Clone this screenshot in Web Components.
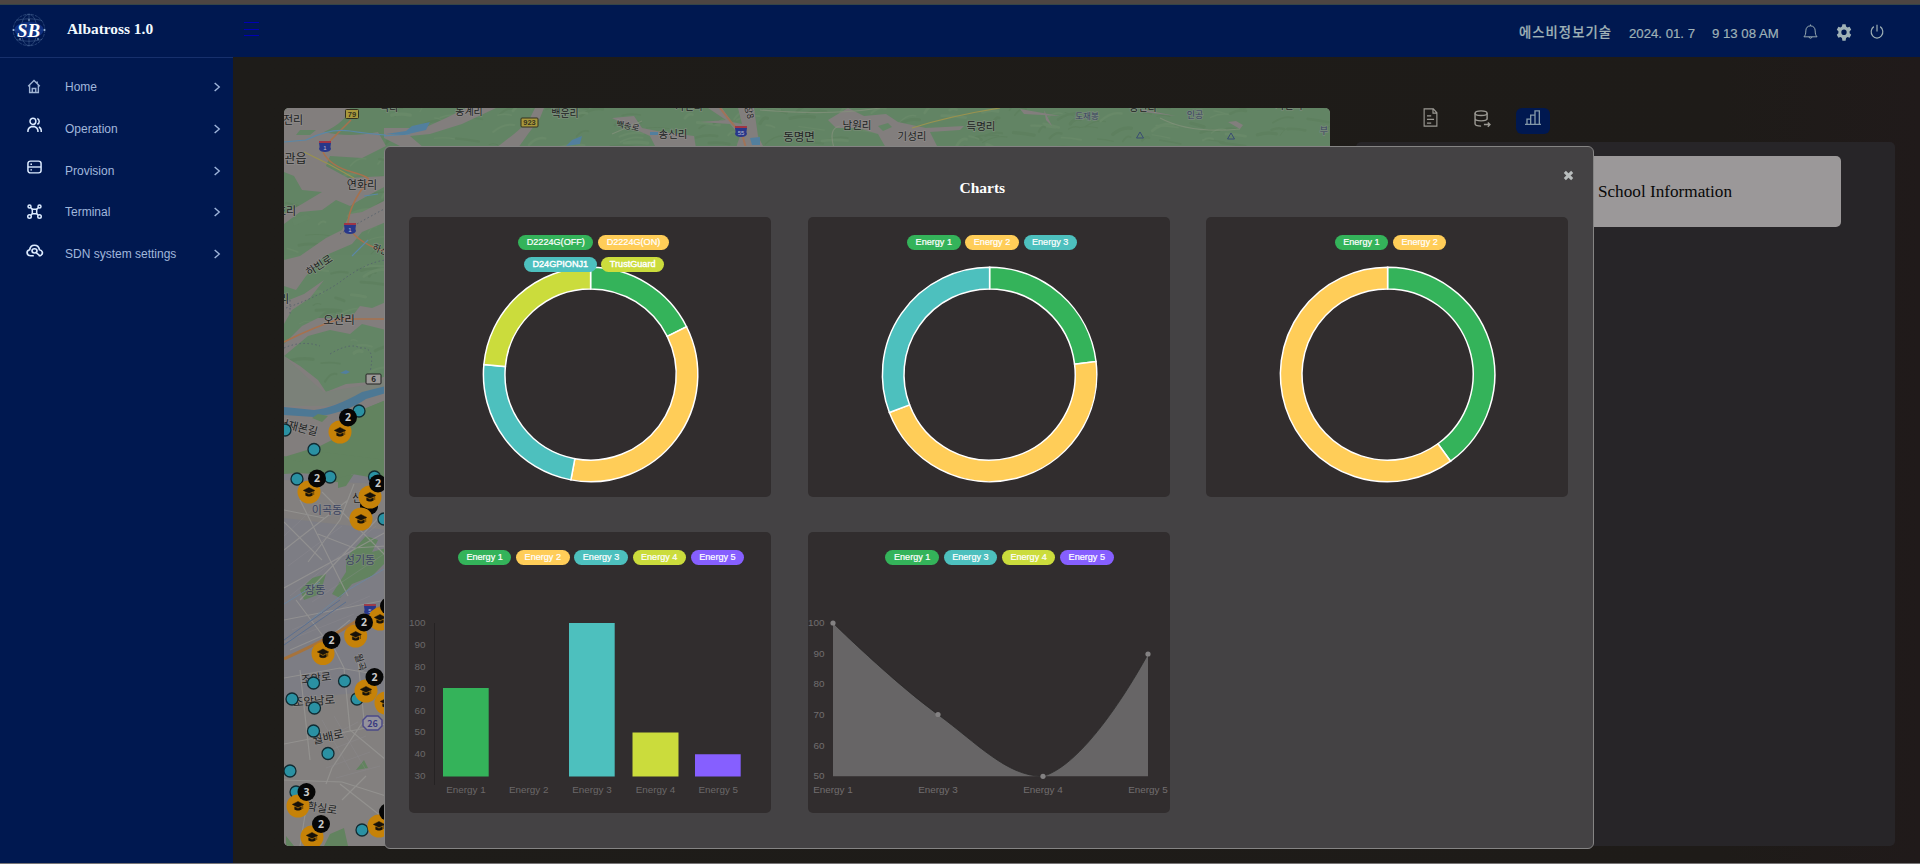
<!DOCTYPE html>
<html lang="ko">
<head>
<meta charset="utf-8">
<title>Albatross 1.0</title>
<style>
html,body{margin:0;height:100%;background:#1e1b18;overflow:hidden}
body{font-family:"Liberation Sans","Noto Sans CJK KR",sans-serif}
</style>
</head>
<body>
<sb-app></sb-app>
<script>
const define=(name,build)=>customElements.define(name,class extends HTMLElement{
  connectedCallback(){
    if(this.shadowRoot)return;
    this.attachShadow({mode:'open'}).innerHTML=build(this);
  }
});

/* Line icons, 24 unit grid */
const ICONS={
  home:'<path d="M2 11.500 12 2.500l10 9M4.500 10v11.500h15V10M9 21.500v-6.500h6v6.500M17.500 4v3"/>',
  users:'<circle cx="9.500" cy="6.500" r="4.700"/><path d="M1.500 22.500v-2a7 7 0 0 1 5-6h6a7 7 0 0 1 5 6v2M16.500 2.200a4.700 4.700 0 0 1 0 8.800M19 15a6 6 0 0 1 3.800 5.500v2"/>',
  server:'<rect x="1.500" y="2" width="21" height="20" rx="4"/><path d="M1.500 12h21"/><path d="M5.500 7.200H8M5.500 17H8"/>',
  nodes:'<circle cx="4" cy="4" r="2.400"/><circle cx="20" cy="4" r="2.400"/><circle cx="4" cy="20" r="2.800"/><circle cx="20" cy="20" r="2.800"/><rect x="8.500" y="8.500" width="7" height="7" rx="1"/><path d="M6 6l3 3M18 6l-3 3M6 18l3-3M18 18l-3-3"/>',
  cloud:'<path d="M11 20.500H6.500a5 5 0 0 1-1.300-9.800Q6 3.500 12 3.500t7 7.200a5 5 0 0 1 2.500 8.600q-1.500 1.200-3.500 1.200"/><circle cx="12" cy="12.500" r="3.500"/><path d="M14.500 15.500l5 5"/>',
  right:'<path d="M8 4l8 8-8 8"/>',
  bell:'<path d="M1.500 20.500h21c-2-2-3-4.500-3-9.500 0-5-3-8-7.500-8s-7.500 3-7.500 8c0 5-1 7.500-3 9.500zM12 3V.8M9.500 20.500c.5 3 4.500 3 5 0"/>',
  gear:'<path stroke="none" fill="currentColor" fill-rule="evenodd" d="M9.600.5h4.800l.7 3.200 2.200 1.200 3.100-1 2.400 4.200-2.400 2.200v2.600l2.400 2.200-2.400 4.200-3.100-1-2.200 1.300-.7 3.900H9.600l-.7-3.900-2.200-1.300-3.100 1-2.400-4.200 2.400-2.200v-2.600L1.200 8.100l2.400-4.200 3.100 1 2.200-1.200zM12 7.600a4 4 0 1 0 0 8 4 4 0 0 0 0-8z"/>',
  power:'<path d="M12 1v11M6.500 4.200a10 10 0 1 0 11 0"/>',
  doc:'<path d="M3 1h13l5 5v17H3zM15.500 1v5.500H21M7 10h6M7 14.500h10M7 19h6"/>',
  database:'<ellipse cx="10" cy="4.500" rx="8.500" ry="3.300"/><path d="M1.500 4.500v15c0 2 4 3.300 8.500 3.300M18.500 4.500v9M1.500 12c0 2 4 3.300 8.500 3.300s8.500-1.300 8.500-3.300M14 20.500h7.500M19.500 17.500l3 3-3 3"/>',
  chart:'<path d="M0 22.800h24M3 22.500v-8h5.500M8.500 22.500V8H15M15 22.500V1.500h6.500v21"/>',
  close:'<path d="M4 4l16 16M20 4L4 20" stroke-width="6.500"/>'
};
define('sb-icon',el=>`<style>:host{display:block;flex:none}svg{display:block;overflow:visible}</style>
<svg width="${el.getAttribute('w')||16}" height="${el.getAttribute('h')||el.getAttribute('w')||16}" viewBox="0 0 24 24" preserveAspectRatio="none" fill="none" stroke="currentColor" stroke-width="${el.getAttribute('stroke')||2}">${ICONS[el.getAttribute('name')]}</svg>`);

define('sb-logo',()=>`<style>:host{display:block;flex:none}svg{display:block}</style>
<svg width="34" height="36" viewBox="-17 -18 34 36"><g fill="none" stroke="#6f8fb8" stroke-width=".5" opacity=".7">
<circle r="15.800" stroke-dasharray="3 1"/><ellipse rx="8" ry="15.800"/><path d="M0-16V16M-16 0H16M-13-9.500Q0-13 13-9.500M-13 9.500Q0 13 13 9.500"/></g>
<ellipse rx="14.500" ry="8" fill="#153a94" opacity=".7"/>
<g fill="#9eb8d8"><circle cx="-15.500" r="1"/><circle cx="15.500" r="1"/><circle cy="-10" r=".8"/><circle cx="-9" cy="9" r=".8"/><circle cx="9" cy="9" r=".8"/></g>
<text y="6.500" x="-.500" text-anchor="middle" font-family="Liberation Serif,serif" font-style="italic" font-weight="bold" font-size="19" fill="#fff">SB</text></svg>`);

define('sb-header',()=>`<style>
:host{display:flex;align-items:stretch;height:52px;background:#001850;color:#9fb1b6}
.brand{width:233px;box-sizing:border-box;display:flex;align-items:flex-start;padding-left:12px}
sb-logo{margin-top:7px}
h1{margin:15px 0 0 21px;font:bold 15.400px/18px "Liberation Serif",serif;color:#f2faff;white-space:nowrap}
.burger{margin:17px 0 0 11px;width:15px;height:14px;display:flex;flex-direction:column;justify-content:space-between}
.burger i{height:1px;background:#0000b4}
.right{margin-left:auto;display:flex;align-items:flex-start;padding-right:36px;font-size:13.200px;line-height:16px;white-space:nowrap;-webkit-text-stroke:.2px #9fb1b6}
.name{font:500 13.300px/16px "Noto Sans CJK KR",sans-serif;margin-top:19px;width:93px;letter-spacing:1.050px}
.date{margin:21px 0 0 17px;width:66px}.time{margin:21px 0 0 17px;width:67px}
sb-icon{margin-top:19px}
</style><div class="brand"><sb-logo></sb-logo><h1>Albatross 1.0</h1></div><div class="burger"><i></i><i></i><i></i></div>
<div class="right"><span class="name">에스비정보기술</span><span class="date">2024. 01. 7</span><span class="time">9 13 08 AM</span>
<sb-icon name="bell" w="15" h="15" stroke="1.500" style="margin-left:24px"></sb-icon><sb-icon name="gear" w="16" h="17" style="margin-left:18px"></sb-icon><sb-icon name="power" w="14" h="15" style="margin-left:18px"></sb-icon></div>`);

define('sb-nav-item',el=>`<style>
:host{display:flex;align-items:center;height:41.700px;padding:0 9px 0 26px;color:#a0b7dc;font-size:12px}
.ic{color:${el.getAttribute('tone')||'#dcebff'};width:16px;display:flex;justify-content:center;margin-top:${el.getAttribute('shift')}px;margin-right:23px}
span{flex:1;white-space:nowrap}
</style><div class="ic"><sb-icon name="${el.getAttribute('icon')}" w="${el.getAttribute('size')||15}" h="${el.getAttribute('ih')||15}" stroke="2.400"></sb-icon></div><span><slot></slot></span><sb-icon name="right" w="14" h="12" stroke="2.300"></sb-icon>`);

define('sb-sidebar',()=>`<style>
:host{display:block;width:233px;flex:none;box-sizing:border-box;background:#001850;border-top:1px solid #17306c;padding-top:8.500px}
</style>
<sb-nav-item icon="home" tone="#a0b4d4" size="14" shift="-1">Home</sb-nav-item>
<sb-nav-item icon="users" ih="16" shift="-8">Operation</sb-nav-item>
<sb-nav-item icon="server" ih="14" shift="-8">Provision</sb-nav-item>
<sb-nav-item icon="nodes" shift="-2">Terminal</sb-nav-item>
<sb-nav-item icon="cloud" size="17" ih="15" shift="-8">SDN system settings</sb-nav-item>`);

/* Map canvas: terrain, roads, place names and pins share one coordinate space */
const places=[
 ['지전리',288,124,11],['지관읍',290,163,12],['연화리',362,189,11],['흐리',286,215,11],['하빈로',319,269,10.500,-33],['동리',279,303,11],['오산리',339,324,11.500],['하산',381,253,9,22],
 ['서재본길',298,431,11,14],['신',357,502,11],['조암로',316,682,11,-7],['조암남로',314,705,11.500,-4],['월곡',361,666,9.500,72],['월배로',328,741,11.500,-12],['학실로',322,812,11,8],
 ['덕리',389,111,10],['동계리',469,115,10],['백운리',565,117,10],['백송로',628,129,8.500,12],['송신리',673,138,10.500],['가신리',689,110,10],['장8',750,116,9,75],['동명면',799,141,11.500],['남원리',857,129,10.500],['기성리',912,140,10.500],['득명리',981,130,10.500],['동산리',1143,111,10],['가산리',1289,109,10]
];
const softPlaces=[['이곡동',327,514,11],['성기동',360,564,11],['장동',315,594,11.500],['도재봉',1087,119,8.500],['인공',1195,118,9],['부',1324,134,9]];
const label=(p,fill,halo)=>`<text x="${p[1]}" y="${p[2]}" font-size="${p[3]}" text-anchor="middle" fill="${fill}" stroke="${halo}" stroke-width="1.600" stroke-opacity=".45" paint-order="stroke"${p[4]?` transform="rotate(${p[4]} ${p[1]} ${p[2]-4})"`:''}>${p[0]}</text>`;
const dots=[[359,411],[285,430],[314,449.5],[297,479],[330,477],[374.5,477],[384,519],[313.5,683],[344.5,681],[292,699],[314.5,708],[357,699],[313.5,731],[328,753.5],[290,771],[296,792],[362,830]];
const dot=([x,y])=>`<circle cx="${x}" cy="${y}" r="6" fill="#2a91a3" stroke="#102b32" stroke-width="1.300"/>`;
const cap=([x,y])=>`<g transform="translate(${x} ${y})"><circle r="11.500" fill="#c68208"/><path d="M-5.700-1.600 0-4.500l5.700 2.900L0 1.200zM-3.300.8 0 2.400 3.300.8v2.600Q0 5.200-3.300 3.400zM4.700-1.500V3" fill="#17120a" stroke="#17120a" stroke-width=".5"/></g>`;
const badge=([x,y,n])=>`<circle cx="${x}" cy="${y}" r="9" fill="#060606"/>${n?`<text x="${x}" y="${y+3.7}" text-anchor="middle" font-family="Open Sans,sans-serif" font-weight="bold" font-size="10.500" fill="#cacaca">${n}</text>`:''}`;
const shield=(x,y,n)=>`<path d="M${x-6} ${y-3}h12q-1 4 0 6-1 3-6 3t-6-3q1-2 0-6z" fill="#29378a"/><path d="M${x-6} ${y-4}h12" stroke="#a03545" stroke-width="1.800"/><text x="${x}" y="${y+3.5}" font-size="6" text-anchor="middle" fill="#b8b8cc" font-family="Liberation Sans,sans-serif">${n}</text>`;
const plate=(x,y,w,n)=>`<rect x="${x-w/2}" y="${y-4.5}" width="${w}" height="9" rx="1" fill="#a8983c" stroke="#33311e"/><text x="${x}" y="${y+2.7}" font-size="7.500" font-weight="bold" text-anchor="middle" fill="#35331f" font-family="Liberation Sans,sans-serif">${n}</text>`;

/* Deterministic ridge shading across the hills */
let seed=7;const rnd=()=>(seed=(seed*16807)%2147483647)/2147483647;
let ridges='';
for(let i=0;i<190;i++){const wide=i<135,x=wide?385+rnd()*945:284+rnd()*100,y=wide?106+rnd()*42:150+rnd()*235,l=6+rnd()*20,d=rnd()*12-8;
 ridges+=`<path d="M${x.toFixed(1)} ${y.toFixed(1)}q${(l/2).toFixed(1)} ${(d-2).toFixed(1)} ${l.toFixed(1)} ${d.toFixed(1)}" stroke="${rnd()>.5?'#587a57':'#72906f'}" stroke-width="${(1+rnd()*2.5).toFixed(1)}"/>`;}

define('sb-map',()=>`<style>:host{display:block;width:1046px;height:738px;border-radius:5px;overflow:hidden;background:#807e7d}svg{display:block}</style>
<svg width="1046" height="738" viewBox="284 108 1046 738" font-family="Noto Sans CJK KR,sans-serif">
<rect x="284" y="108" width="1046" height="330" fill="#638565"/>
<g fill="none" stroke-linecap="round" opacity=".38">${ridges}</g>
<g fill="#827e7d">
<path d="M284 108H350Q346 122 324 132 348 138 378 132L386 146 362 158 330 156 326 166 348 178 386 176 386 186 360 200 350 206 336 200 322 210 300 212 284 224V214L302 204 322 192 302 190 294 176 284 172z"/>
<path d="M386 222 362 232 352 244 324 256 306 276 296 290 284 286V260L300 256 326 238 342 230 350 214 362 212 386 200z"/>
<path d="M284 302 304 294 324 280 310 298 292 310 284 324z"/>
<path d="M386 302 372 308 360 306 354 314 338 318 318 318 302 326 284 344V356L308 336 330 330 350 334 362 324 386 330z"/>
<path d="M284 356 300 366 318 380 326 392 346 384 370 382 386 376V400L358 412 344 438 320 450 284 456z"/>
<path d="M384 128 424 128 446 118 466 108H496L462 124 430 134 410 136 424 148H404L384 138z"/>
<path d="M535 108 528 122 514 134 496 148H518L528 134 540 118 544 108z"/>
<path d="M612 118 634 116 642 128 662 132 694 136 696 148H656L650 136 632 128z"/>
<path d="M708 108 726 120 700 122 730 124 740 136 736 148H764L758 136 754 108 738 108 742 124 732 122 722 108z"/>
<path d="M828 120 848 108 864 116 886 114 898 122 926 128 964 126 960 130 930 132 938 148H886L878 134 858 128 836 128z"/>
<path d="M1020 109 1060 116 1024 114zM1228 122 1236 121 1243 125 1240 129zM1044 110 1052 126 1046 120zM1140 109 1176 116 1144 112z"/>
</g>
<path d="M300 130h16l-6 5h-14zM292 220l14-6 6 4-18 8zM878 126l10-3 4 4-9 4z" fill="#638565"/>
<path d="M284 356 Q310 380 324 392 L372 384 386 378V386L330 406H284z" fill="#7b8179"/>
<path d="M284 415 314 417Q346 413 366 399L386 393V386L362 392Q334 408 314 410L284 407z" fill="#4d7894"/>
<path d="M284 457 320 446 344 434 356 412 386 400V478L342 476 284 472z" fill="#62835f"/>
<rect x="284" y="474" width="102" height="372" fill="#7d7d84"/>
<path d="M284 456 298 462 322 452 386 460V480L352 474 340 484 310 472 284 474z" fill="#62835f"/>
<path d="M284 480 386 484V530L284 518zM284 700 386 690V846H284z" fill="#83807f"/>
<path d="M318 414l10 2-6 6-10-4zM338 478l16-4-8 12-8 2zM366 536 378 540 372 552 386 548V562L372 576 352 584 340 598 332 594 346 572 346 558zM312 578 326 574 320 594 304 600 300 590zM356 770l8-10 4 8zM330 834l14-6 4 18h-24zM286 836l8 10h-8z" fill="#62835f"/>
<g fill="none" stroke="#9a9895" stroke-width="1.200" opacity=".7">
<path d="M284 522 322 560M284 550 348 500M300 600 384 512M284 588 386 532M300 500 348 596M322 492 386 556M284 620 386 600M296 600 326 640 350 620M284 678 340 668 386 676M284 744 386 724M284 780 342 782 386 796M330 640 344 668 350 730 386 760M300 670 310 760M358 660 364 720 332 768 326 784M342 800 366 776M310 784 300 846M340 784 386 820M290 650 322 636M318 534 354 548 386 546M284 510 324 518M354 484 340 520 308 562"/></g>
<g fill="none" stroke="#8f8d94" stroke-width=".5" opacity=".65"><path d="M284 536 318 504M288 566 342 526M290 596 376 526M312 602 384 554M316 744 358 722M320 754 366 736M326 768 370 752M336 778 380 766M322 720 350 770M334 716 366 770M292 630 370 596M284 642 354 614"/></g>
<g fill="none" stroke="#6e859c" stroke-width="1"><path d="M306 624 348 590 386 568M284 604 320 582"/><path d="M284 640 340 600M284 645 346 602" stroke="#5b6f8e"/></g>
<path d="M284 659Q330 638 355 622T386 606" fill="none" stroke="#a6733c" stroke-width="3"/>
<g fill="none" stroke="#53606c" stroke-width=".9" stroke-dasharray="1.500 2.500"><path d="M286 308Q320 296 340 282 366 262 386 260M340 234Q356 224 386 208M284 348Q302 340 320 346M330 354Q350 342 360 348 376 346 370 372M290 300v14"/></g>
<g fill="none" stroke="#a7714d" stroke-width="1.600"><path d="M351 120 330 141M323 152Q330 166 352 172T367 182Q350 204 348 222 350 240 386 252M284 342Q316 326 340 319H386"/></g>
<path d="M304 152Q330 164 354 178M912 128Q950 116 1000 108" fill="none" stroke="#99924f" stroke-width="1.200"/>
<path d="M720 108Q732 124 742 134L746 148" fill="none" stroke="#a17358" stroke-width="2"/>
<path d="M284 142 306 140Q330 128 350 131T386 135M384 136 410 134M352 256 368 240M364 196 378 194" fill="none" stroke="#5b87a6" stroke-width="1.200"/>
<path d="M386 134 406 131 412 126 430 122 426 130 404 135zM572 140 582 136 580 144 566 146zM650 132h8v3h-8zM750 138l10-1v8h-8zM340 373l6-3 4 2-4 2z" fill="#527f9e"/>
<path d="M612 134 642 121M834 148Q828 128 840 126M760 110Q830 116 880 108M1160 118Q1190 134 1240 129" fill="none" stroke="#85927c" stroke-width="1.200" opacity=".7"/>
<path d="M378 815h8v20h-10z" fill="#52799c"/>
<path d="M1140 132l3.500 6h-7zM1231 133l3.500 6h-7z" fill="none" stroke="#394c73"/>
<g>${places.map(p=>label(p,'#201f1f','#9b9897')).join('')}</g>
${softPlaces.map(p=>label(p,'#3b4460','#918f94')).join('')}
${plate(352,114,13,'79')}${plate(529.5,122.5,17,'923')}${shield(325,146,'1')}${shield(350,228,'1')}${shield(741,131,'55')}${shield(370,609,'5')}
<rect x="366" y="374" width="15" height="10" rx="1" fill="#9a9895" stroke="#222"/><text x="373.500" y="382" font-size="8" text-anchor="middle" fill="#222" font-weight="bold">6</text>
<path d="M367 716h11l4 4v6l-4 4h-11l-4-4v-6z" fill="#94929d" stroke="#4b4988" stroke-width="1.400"/><text x="372.500" y="726.500" font-size="9" text-anchor="middle" fill="#3a3a80" font-weight="bold">26</text>
${dots.map(dot).join('')}${badge([369,506])}
${[[340,432],[309,492],[370,497],[361,519],[380,619],[355.7,636],[323,653.5],[366,691],[386,703],[298,806],[312,837],[379,826]].map(cap).join('')}
${[[348,417.5,2],[317,478.5,2],[378,483.5,2],[364,622.5,2],[389,606],[331.5,640,2],[374.5,677,2],[306.5,792,3],[321,824,2],[388,812]].map(badge).join('')}
</svg>`);

define('sb-side-panel',()=>`<style>
:host{display:flex;flex-direction:column;width:539px}
nav{display:flex;height:34px;align-items:flex-start;padding-left:66px;color:#9b9993}
.active{background:#001850;border-radius:6px;width:34px;height:26px;display:flex;justify-content:center;margin-left:25px;color:#8398a8}
.panel{flex:1;background:#272528;border-radius:5px;display:flex;flex-direction:column;align-items:flex-end;padding:14px 54px 0 0}
.school{width:352px;height:71px;background:#9b9899;border-radius:5px;display:flex;align-items:center;justify-content:center;font:17.200px "Liberation Serif",serif;color:#080808}
</style><nav><sb-icon name="doc" w="17" h="19" stroke="1.600"></sb-icon><sb-icon name="database" w="17" h="17" style="margin:2px 0 0 35px" stroke="2"></sb-icon><div class="active"><sb-icon name="chart" w="16" h="15" style="margin-top:2px" stroke="2"></sb-icon></div></nav>
<div class="panel"><div class="school">School Information</div></div>`);

/* Legend chips: "Label:colour" pairs, "|" starts a new row */
define('sb-legend',el=>`<style>
:host{display:flex;flex-direction:column;gap:7px;align-items:center}
div{display:flex;gap:4.800px}
div+div{margin-left:1px;--w:.4px}
span{height:15px;box-sizing:border-box;border-radius:8px;padding:0 8.500px;font-size:9.100px;line-height:15.500px;color:#fff;white-space:nowrap;-webkit-text-stroke:var(--w,.2px) #fff}
</style>${el.getAttribute('items').split('|').map(r=>`<div>${r.split(',').map(i=>{const[t,c]=i.split(':');return`<span style="background:${c}">${t}</span>`}).join('')}</div>`).join('')}`);

define('sb-card',el=>`<style>
:host{display:grid;background:#312d2e;border-radius:5px;overflow:hidden}
.plot,.top{grid-area:1/1}
.top{padding:18px 0 0 ${el.getAttribute('offset')}px;z-index:1}
</style><div class="plot"><slot></slot></div><div class="top"><slot name="legend"></slot></div>`);

const SVG='<style>:host{display:block}svg{display:block;font-family:"Liberation Sans",sans-serif}</style>';
define('sb-donut',el=>{
  const parts=el.getAttribute('values').split(',').map(s=>s.split(':')),total=parts.reduce((a,p)=>a+ +p[0],0);
  const pt=(f,r)=>`${(r*Math.sin(f*2*Math.PI)).toFixed(2)} ${(-r*Math.cos(f*2*Math.PI)).toFixed(2)}`;
  let f=0;
  const arcs=parts.map(([v,c])=>{const a=f,b=f+=v/total,big=b-a>.5?1:0;
    return`<path fill="${c}" d="M${pt(a,107.2)}A107.200 107.200 0 ${big} 1 ${pt(b,107.2)}L${pt(b,85.6)}A85.600 85.600 0 ${big} 0 ${pt(a,85.6)}z"/>`}).join('');
  return`${SVG}<svg width="362" height="280"><g transform="translate(181.600 157.500)" stroke="#fff" stroke-width="1.500">${arcs}</g></svg>`;
});
const tick=(t,x,y,a)=>`<text x="${x}" y="${y}" text-anchor="${a}">${t}</text>`;
define('sb-bars',()=>`${SVG}<svg width="362" height="281"><path d="M25.500 91V253" stroke="#252223"/>
<path d="M34 156h45.700v88.500H34z" fill="#34b35a"/><path d="M160 91h45.700v153.500H160z" fill="#4dc0be"/><path d="M223.500 200.500h46v44h-46z" fill="#cbdc3c"/><path d="M286 222.300h45.700v22.200H286z" fill="#865fff"/>
<g font-size="9.900" fill="#6b6869">${[100,90,80,70,60,50,40,30].map((v,i)=>tick(v,16.4,(94.2+i*21.85).toFixed(1),'end')).join('')}${[57,119.7,183,246.5,309.3].map((x,i)=>tick('Energy '+(i+1),x,261,'middle')).join('')}</g></svg>`);
define('sb-area',()=>`${SVG}<svg width="362" height="281">
<path d="M25 91C25 91 85.100 150 130 182.500 169.100 211.300 198.900 244.300 235 244.300 282.900 230.500 340 122 340 122V244.300H25z" fill="#676566"/>
<path d="M25 91C25 91 85.100 150 130 182.500 169.100 211.300 198.900 244.300 235 244.300 282.900 230.500 340 122 340 122" fill="none" stroke="#2b2929" stroke-width=".8"/>
<g fill="#838182"><circle cx="25" cy="91" r="2.600"/><circle cx="130" cy="182.500" r="2.600"/><circle cx="235" cy="244.300" r="2.600"/><circle cx="340" cy="122" r="2.600"/></g>
<g font-size="9.900" fill="#716e6f">${[100,90,80,70,60,50].map((v,i)=>tick(v,16.4,(94.2+i*30.6).toFixed(1),'end')).join('')}${[[25,1],[130,3],[235,4],[340,5]].map(p=>tick('Energy '+p[1],p[0],261,'middle')).join('')}</g></svg>`);

define('sb-modal',()=>`<style>
:host{display:flex;flex-direction:column;box-sizing:border-box;background:#444244;border:1px solid #858484;border-radius:6px;padding:0 0 0 24px}
header{display:flex;height:70px;color:#b9bdbd}
h2{margin:32px 0 0 550.500px;font:bold 15.500px/18px "Liberation Serif",serif;color:#fff;width:60px}
header sb-icon{margin:23px 19px 0 auto}
.grid{display:grid;grid-template-columns:repeat(3,362px);grid-template-rows:280px 281px;column-gap:36.500px;row-gap:35px}
</style><header><h2>Charts</h2><sb-icon name="close" w="11" h="11"></sb-icon></header><div class="grid"><slot></slot></div>`);

define('sb-app',()=>{
 const g='#34b35a',y='#ffcd58',t='#4dc0be',l='#cbdc3c',p='#865fff';
 return`<style>
:host{display:flex;flex-direction:column;width:1920px;height:864px;box-sizing:border-box;position:relative;border-top:4px solid #4d4542;border-bottom:1px solid #777576;overflow:hidden}
.line{height:1px;background:#354447;flex:none}
sb-header{flex:none}
.body{flex:1;display:flex;min-height:0}
main{flex:1;display:flex;gap:26px;padding:51px 25px 17px 51px;box-sizing:border-box;background:linear-gradient(90deg,#1e1c19,#1e1b18 88%,#201a1a)}
sb-modal{position:absolute;left:384px;top:142px;width:1210px;height:703px}
</style><div class="line"></div><sb-header></sb-header>
<div class="body"><sb-sidebar></sb-sidebar><main><sb-map></sb-map><sb-side-panel></sb-side-panel></main></div>
<sb-modal>
<sb-card offset="7"><sb-legend slot="legend" items="D2224G(OFF):${g},D2224G(ON):${y}|D24GPIONJ1:${t},TrustGuard:${l}"></sb-legend><sb-donut values="3:${g},6:${y},4:${t},4:${l}"></sb-donut></sb-card>
<sb-card offset="7"><sb-legend slot="legend" items="Energy 1:${g},Energy 2:${y},Energy 3:${t}"></sb-legend><sb-donut values="3:${g},6:${y},4:${t}"></sb-donut></sb-card>
<sb-card offset="7"><sb-legend slot="legend" items="Energy 1:${g},Energy 2:${y}"></sb-legend><sb-donut values="4:${g},6:${y}"></sb-donut></sb-card>
<sb-card offset="22"><sb-legend slot="legend" items="Energy 1:${g},Energy 2:${y},Energy 3:${t},Energy 4:${l},Energy 5:${p}"></sb-legend><sb-bars></sb-bars></sb-card>
<sb-card offset="22"><sb-legend slot="legend" items="Energy 1:${g},Energy 3:${t},Energy 4:${l},Energy 5:${p}"></sb-legend><sb-area></sb-area></sb-card>
</sb-modal>`});
</script>
</body>
</html>
